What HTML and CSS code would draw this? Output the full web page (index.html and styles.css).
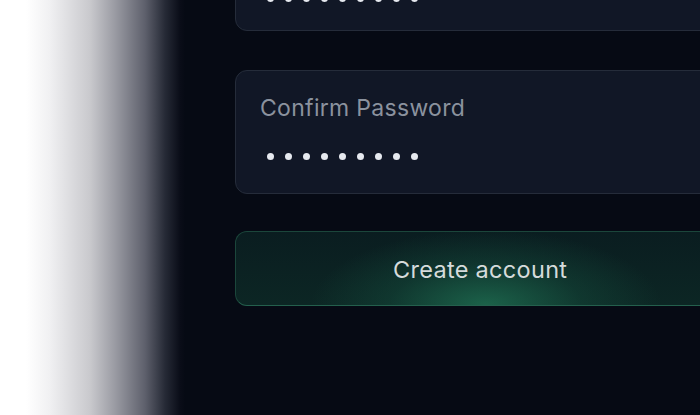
FILE: index.html
```html
<!DOCTYPE html>
<html>
<head>
<meta charset="utf-8">
<link rel="stylesheet" href="styles.css">
</head>
<body>
<div class="page">
  <div class="shade"></div>
  <div class="form">
    <div class="field field-top">
      <div class="dots">
        <span></span><span></span><span></span><span></span><span></span><span></span><span></span><span></span><span></span>
      </div>
    </div>
    <div class="field field-main">
      <div class="label">Confirm Password</div>
      <div class="dots">
        <span></span><span></span><span></span><span></span><span></span><span></span><span></span><span></span><span></span>
      </div>
    </div>
    <div class="button">Create account</div>
  </div>
</div>
</body>
</html>
```
FILE: styles.css
```css
html, body {
  margin: 0;
  padding: 0;
  width: 700px;
  height: 415px;
  overflow: hidden;
  background: #060a14;
}
.page {
  display: flex;
  height: 415px;
  font-family: Inter, "Noto Sans", sans-serif;
}
.shade {
  width: 185px;
  flex-shrink: 0;
  background: linear-gradient(90deg, #ffffff 0px, #ffffff 26px, #f0f0f2 50px, #c9c9cd 90px, #9a9ba3 115px, #5e606c 145px, #262a36 165px, #0a0d18 180px, #060a14 185px);
}
.form {
  display: flex;
  flex-direction: column;
  padding-left: 50px;
  width: 480px;
  flex-shrink: 0;
  margin-top: -87px;
}
.field {
  box-sizing: border-box;
  height: 124px;
  border: 1px solid #252c3a;
  border-radius: 12px;
  background: #111726;
  padding: 22px 0 0 24px;
}
.field-top {
  height: 118px;
  padding-top: 81px;
}
.field-main {
  margin-top: 39px;
}
.label {
  font-size: 23px;
  line-height: 30px;
  color: #8b929e;
  letter-spacing: 0.3px;
}
.dots {
  display: flex;
  gap: 11px;
  padding-left: 7px;
  margin-top: 30px;
}
.field-top .dots {
  margin-top: 0;
}
.dots span {
  width: 7px;
  height: 7px;
  border-radius: 50%;
  background: #e6e9ef;
}
.button {
  box-sizing: border-box;
  margin-top: 37px;
  height: 75px;
  border: 1px solid #1b463b;
  border-bottom-color: #24604d;
  border-radius: 12px;
  background:
    radial-gradient(ellipse 175px 75px at 250px 100%, rgba(30,108,80,0.85), rgba(22,82,64,0.4) 55%, rgba(0,0,0,0) 100%),
    linear-gradient(180deg, #0a1d20, #0c2624);
  display: flex;
  align-items: center;
  padding-left: 157px;
  padding-top: 2px;
  font-size: 23.5px;
  color: #d5dbdb;
  letter-spacing: 0.3px;
}
```
